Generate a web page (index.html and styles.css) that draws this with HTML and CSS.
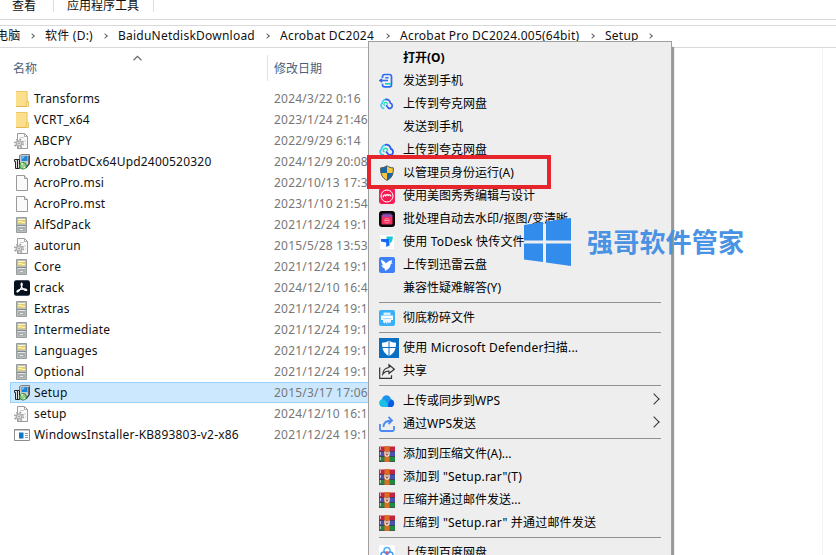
FILE: index.html
```html
<!DOCTYPE html>
<html lang="zh-CN">
<head>
    <meta charset="UTF-8">
    <title>Setup</title>
    <link rel="stylesheet" href="styles.css">
</head>
<body>
    <!-- icon shapes used by the file list and the menu -->
    <svg class="defs" width="0" height="0">
        <symbol id="folder" viewBox="0 0 16 16">
            <path d="M2 .5h11.500v10h1v5H2z" fill="#fbdf8c"/>
            <path d="M2 .5h11v10M12.500 10.500h2v5H12z" fill="none" stroke="#ecc765"/>
            <path d="M2 15.500h10" stroke="#e3b84c"/>
        </symbol>
        <symbol id="file" viewBox="0 0 16 16">
            <path d="M2.500.5h8l3 3v12h-11z" fill="#fafafa" stroke="#999"/>
            <path d="M10.500.5v3h3" fill="#eee" stroke="#999"/>
        </symbol>
        <symbol id="config" viewBox="0 0 16 16">
            <path d="M3.500.5h7l3 3v12h-10z" fill="#fafafa" stroke="#999"/>
            <path d="M10.500.5v3h3" fill="none" stroke="#aaa"/>
            <path d="M6 4.500h4M10 8h2M11 11h1" fill="none" stroke="#ccc"/>
            <circle cx="5" cy="10.500" r="4.200" fill="none" stroke="#999" stroke-width="1.600" stroke-dasharray="1.700 1.600"/>
            <circle cx="5" cy="10.500" r="2.600" fill="#f4f4f4" stroke="#aaa" stroke-width="1.500"/>
            <circle cx="5" cy="10.500" r="1" fill="#999"/>
        </symbol>
        <symbol id="cabinet" viewBox="0 0 16 16">
            <path d="M2.500.5h10v15h-10z" fill="#b9bdbd" stroke="#979c9c"/>
            <path d="M4 3.500h7v3H4z" fill="#f3d65b"/>
            <path d="M4 2.500h7M4 5l3-1 1 1.500h3" fill="none" stroke="#fff6c4"/>
            <path d="M3 8.500h9" stroke="#858b8b"/>
            <path d="M4 10h7v4H4z" fill="#a9afaf"/>
            <path d="M4 9.500h7M6 12.500h3" stroke="#e6e6e6"/>
        </symbol>
        <symbol id="setup" viewBox="0 0 16 16">
            <path d="M5.500 1.500l2-1h8v9l-2 2h-8z" fill="#c5cbd0" stroke="#666" stroke-width=".8"/>
            <path d="M7.500 2h6v5h-6z" fill="#1c87d8"/>
            <path d="M8 2.500h3L8.500 5z" fill="#8fd4ff"/>
            <path d="M15 2v8l-3 4" fill="none" stroke="#333" stroke-width="1.200"/>
            <path d="M.5 5.500h5v9h-4v-7h-1zM3.500 6v9" fill="#ddd" stroke="#222"/>
            <circle cx="9" cy="11.800" r="3.300" fill="#9fd884" stroke="#1d8a35" stroke-width="1"/>
            <path d="M9 11.800L6.500 9.500 9 8.800zM9 11.800l2.800 1.200-2 1.700z" fill="#f0f6c8"/>
            <circle cx="9" cy="11.800" r="1.100" fill="#fff" stroke="#2a7a39" stroke-width=".5"/>
        </symbol>
        <symbol id="acrobat" viewBox="0 0 16 16">
            <rect width="16" height="15.500" y=".2" rx="2.200" fill="#05111f"/>
            <path d="M3.200 12c-1.200-.6.800-2 3.300-2.600s5.500-.5 6.300.5c.6.9-1.600 1-3.300-.5C7.800 7.600 6.800 5 7.200 3.600c.4-1.200 1.400-.2 1 1.600-.5 2.600-3.700 7.300-5 6.800z" fill="none" stroke="#fff" stroke-width="1.100"/>
        </symbol>
        <symbol id="exe" viewBox="0 0 16 16">
            <path d="M.5 2.500h15v11H.5z" fill="#fff" stroke="#8c8c8c"/>
            <path d="M1 3h14v1H1z" fill="#ccc"/>
            <path d="M5 5.500h4.500v6H5z" fill="#0b79c9"/>
            <path d="M11 6.500h3M11 8.500h3M11 10.500h3" stroke="#8a9ba8"/>
        </symbol>
        <symbol id="phone" viewBox="0 0 16 16">
            <path d="M3.500 5V3.700q0-2.200 2.200-2.200h4.600q2.200 0 2.200 2.200v8q0 2.200-2.200 2.200H5.700q-2.200 0-2.200-2.200v-1" fill="none" stroke="#2f6bf2" stroke-width="1.700"/>
            <path d="M9.500 4.800H6.300M9 7.500H1l2-1.700M1 7.500l2 1.700" fill="none" stroke="#2f6bf2" stroke-width="1.500"/>
            <path d="M6 10.800h6" stroke="#18d3c4" stroke-width="1.600"/>
        </symbol>
        <symbol id="quark" viewBox="0 0 16 16">
            <path d="M5 13H4.200A3.200 3.200 0 0 1 2.500 7.200Q3 3 7 2.800" fill="none" stroke="#38c8f4" stroke-width="1.800"/>
            <path d="M6 2.900c3-.8 5.500 1 5.800 4A3.200 3.200 0 0 1 11.800 13H10L7 9.500" fill="none" stroke="#295cf0" stroke-width="1.800"/>
            <path d="M8.300 9A2 2 0 1 0 5.500 10" fill="none" stroke="#1fe0b8" stroke-width="1.400"/>
        </symbol>
        <symbol id="shield" viewBox="0 0 16 16">
            <path d="M8 .6c2 1.500 4 2 6.500 2.200 0 6-1.200 10-6.500 12.800C2.700 12.800 1.500 8.800 1.500 2.800 4 2.600 6 2.100 8 .6z" fill="#f8c63d"/>
            <path d="M8 .8V8H1.800C1.500 6.200 1.500 4 1.500 2.900 4 2.600 6 2.100 8 .8zM8 8h6.200c-.7 3.400-2.500 5.800-6.200 7.500z" fill="#1767a8"/>
            <path d="M8 .8c2 1.500 4 2 6.400 2.100 0 6-1.200 9.800-6.400 12.500C2.800 12.700 1.600 8.900 1.600 2.900 4 2.700 6 2.200 8 .8z" fill="none" stroke="#4e5a60"/>
        </symbol>
        <symbol id="meitu" viewBox="0 0 16 16">
            <rect width="16" height="16" rx="3" fill="#f51c55"/>
            <circle cx="8" cy="8" r="6" fill="none" stroke="#fff" stroke-width="1"/>
            <path d="M4 9.500c.2-2.500 2-3.200 2.800-1.700C7.500 6.300 8.700 6.300 9.200 7.500c1.200-1.200 2.400-.6 2.800.8" fill="none" stroke="#fff" stroke-width="1.200"/>
        </symbol>
        <symbol id="batch" viewBox="0 0 16 16">
            <rect width="16" height="16" rx="3" fill="#0b0709"/>
            <path d="M3.500 2.500h9v2h-9z" fill="#70479c"/>
            <path d="M2.500 4h11v2.500h-11z" fill="#9b4bb0"/>
            <rect x="2.500" y="6" width="11" height="7.500" rx="1" fill="#f52c5c"/>
            <circle cx="8" cy="9.700" r="2.400" fill="none" stroke="#ff9ab2" stroke-width=".7"/>
            <path d="M6.300 10q.8-1.500 1.700-.5 1-1 1.700.5" fill="none" stroke="#ffd5de" stroke-width=".8"/>
        </symbol>
        <symbol id="todesk" viewBox="0 0 16 16">
            <path d="M1 1h14v14H1z" fill="#fff"/>
            <path d="M7.500 2.500H14l-.8 4.500L11 9.500V5.500L7.500 5z" fill="#18c8cc"/>
            <path d="M2 5h8.500v6.500L7.200 13V8.500L2 7.500z" fill="#1769f5"/>
        </symbol>
        <symbol id="thunder" viewBox="0 0 16 16">
            <rect width="16" height="16" rx="2" fill="#3f80f6"/>
            <path d="M2 2.500c1.500 1 3.500 1.600 5 4C8.200 5 9.800 3.600 13 3.200c.3 1-.2 1.600-.8 2.300l1.600.8-2 .8C11.500 10 10 12.500 6 14c.3-1.300 0-2-1-2.700-1.500-1-2.300-2-2.500-3.200l2 .3C3 7 2 5 2 2.500z" fill="#fff"/>
        </symbol>
        <symbol id="shred" viewBox="0 0 16 16">
            <rect width="16" height="16" rx="2" fill="#38b0fa"/>
            <path d="M4.500 2.500h7V5h-7z" fill="#d9f1ff"/>
            <path d="M2 5.500h12V10H2z" fill="#fff"/>
            <path d="M4 9h8v4l-1-1-1 1.500-1.200-1.500-1 2-1.200-2-1.200 1.500L4 12z" fill="#eaf7ff"/>
            <path d="M3.500 8.500h9" stroke="#8fd2fb" stroke-width=".8"/>
        </symbol>
        <symbol id="defender" viewBox="0 0 20 20">
            <path d="M0 0h20v20H0z" fill="#0a70c4"/>
            <path d="M10 2.500c2.200 1.600 4.500 2.200 7 2.200 0 6.300-1.500 10.300-7 13.300-5.500-3-7-7-7-13.300 2.500 0 4.800-.6 7-2.200z" fill="#fff"/>
            <path d="M10 2v16M3 9.500h14" stroke="#0a70c4" stroke-width="1"/>
        </symbol>
        <symbol id="share" viewBox="0 0 16 16">
            <path d="M.7 4.500v10.800h11.800v-3" fill="none" stroke="#333" stroke-width="1.200"/>
            <path d="M10 1.800l5.300 4.400-5.300 4.300V8c-2.500 0-4.500.8-6.300 3.200C4 7.300 6 5 10 4.500z" fill="none" stroke="#333" stroke-width="1.200"/>
        </symbol>
        <symbol id="wpscloud" viewBox="0 0 16 16">
            <path d="M4 14A4 4 0 0 1 3 6.300C4 1 11 1 12 6.300A4 4 0 0 1 12.500 14z" fill="#1a93f0"/>
            <path d="M4 14A4 4 0 0 1 3 6.300q5.500 1 6 7.700z" fill="#18c1e4"/>
            <path d="M9 14q0-6 3.500-7.500a4 4 0 0 1 0 7.500z" fill="#0b5be2"/>
        </symbol>
        <symbol id="wpssend" viewBox="0 0 16 16">
            <path d="M1 8v5.500q0 1.500 1.500 1.500h11q1.500 0 1.500-1.500V10" fill="none" stroke="#4a8af4" stroke-width="1.800"/>
            <path d="M4.500 11c0-4 2.500-6.500 8.500-6.500M9.500 1L13 4.500 9.500 8" fill="none" stroke="#4a8af4" stroke-width="1.800"/>
        </symbol>
        <symbol id="rar" viewBox="0 0 16 16">
            <path d="M0 .5h16v5H0z" fill="#c22340"/>
            <path d="M0 5.500h16v5H0z" fill="#4552b4"/>
            <path d="M0 10.500h16v5H0z" fill="#1d8b3b"/>
            <path d="M0 5.500h16M0 10.500h16M0 15.500h16" stroke="#2c2436" stroke-width=".7"/>
            <path d="M1.500 1v14" stroke="#e5c9c9" stroke-width=".8" stroke-dasharray="3 2"/>
            <path d="M5.500 0h5v16h-5z" fill="#dc6e24"/>
            <path d="M5.500 5.500h5v5h-5z" fill="#a8562f"/>
            <path d="M6 5.500v3q0 1.700 2 1.700t2-1.700v-3M8 6v2" fill="none" stroke="#fff" stroke-width="1.100"/>
        </symbol>
        <symbol id="baidu" viewBox="0 0 16 16">
            <rect width="16" height="16" rx="2" fill="#fff"/>
            <circle cx="8" cy="5.500" r="3" fill="none" stroke="#4cb4f7" stroke-width="1.500"/>
            <circle cx="4.800" cy="9.800" r="2.800" fill="none" stroke="#3e9bf5" stroke-width="1.500"/>
            <circle cx="11.200" cy="9.800" r="2.800" fill="none" stroke="#3e9bf5" stroke-width="1.500"/>
            <circle cx="8" cy="7.500" r="1.500" fill="#f0586b"/>
        </symbol>
    </svg>

    <div class="ribbon">
        <span class="tab view">查看</span>
        <span class="tab tools">应用程序工具</span>
    </div>

    <div class="address">
        <span class="crumb pc">电脑</span>
        <span class="crumb drive">软件 (D:)</span>
        <span class="crumb netdisk">BaiduNetdiskDownload</span>
        <span class="crumb dc">Acrobat DC2024</span>
        <span class="crumb pro">Acrobat Pro DC2024.005(64bit)</span>
        <span class="crumb last">Setup</span>
    </div>

    <div class="pane">
        <div class="header">
            <div class="name">名称<svg class="sort" viewBox="0 0 8 5"><path d="M.5 4.500L4 1l3.500 3.500" fill="none" stroke="#666"/></svg></div>
            <div class="date">修改日期</div>
        </div>
        <div class="row"><svg><use href="#folder"/></svg><span class="name">Transforms</span><span class="date">2024/3/22 0:16</span></div>
        <div class="row"><svg><use href="#folder"/></svg><span class="name">VCRT_x64</span><span class="date">2023/1/24 21:46</span></div>
        <div class="row"><svg><use href="#config"/></svg><span class="name">ABCPY</span><span class="date">2022/9/29 6:14</span></div>
        <div class="row"><svg><use href="#setup"/></svg><span class="name">AcrobatDCx64Upd2400520320</span><span class="date">2024/12/9 20:08</span></div>
        <div class="row"><svg><use href="#file"/></svg><span class="name">AcroPro.msi</span><span class="date">2022/10/13 17:3</span></div>
        <div class="row"><svg><use href="#file"/></svg><span class="name">AcroPro.mst</span><span class="date">2023/1/10 21:54</span></div>
        <div class="row"><svg><use href="#cabinet"/></svg><span class="name">AlfSdPack</span><span class="date">2021/12/24 19:1</span></div>
        <div class="row"><svg><use href="#config"/></svg><span class="name">autorun</span><span class="date">2015/5/28 13:53</span></div>
        <div class="row"><svg><use href="#cabinet"/></svg><span class="name">Core</span><span class="date">2021/12/24 19:1</span></div>
        <div class="row"><svg><use href="#acrobat"/></svg><span class="name">crack</span><span class="date">2024/12/10 16:4</span></div>
        <div class="row"><svg><use href="#cabinet"/></svg><span class="name">Extras</span><span class="date">2021/12/24 19:1</span></div>
        <div class="row"><svg><use href="#cabinet"/></svg><span class="name">Intermediate</span><span class="date">2021/12/24 19:1</span></div>
        <div class="row"><svg><use href="#cabinet"/></svg><span class="name">Languages</span><span class="date">2021/12/24 19:1</span></div>
        <div class="row"><svg><use href="#cabinet"/></svg><span class="name">Optional</span><span class="date">2021/12/24 19:1</span></div>
        <div class="row selected"><svg><use href="#setup"/></svg><span class="name">Setup</span><span class="date">2015/3/17 17:06</span></div>
        <div class="row"><svg><use href="#config"/></svg><span class="name">setup</span><span class="date">2024/12/10 16:1</span></div>
        <div class="row"><svg><use href="#exe"/></svg><span class="name">WindowsInstaller-KB893803-v2-x86</span><span class="date">2021/12/24 19:1</span></div>
    </div>

    <div class="menu">
        <div class="item default"><i></i><span>打开(O)</span></div>
        <div class="item"><svg><use href="#phone"/></svg><span>发送到手机</span></div>
        <div class="item"><svg class="small"><use href="#quark"/></svg><span>上传到夸克网盘</span></div>
        <div class="item"><i></i><span>发送到手机</span></div>
        <div class="item"><svg><use href="#quark"/></svg><span>上传到夸克网盘</span></div>
        <div class="item"><svg><use href="#shield"/></svg><span>以管理员身份运行(A)</span></div>
        <div class="item"><svg><use href="#meitu"/></svg><span>使用美图秀秀编辑与设计</span></div>
        <div class="item"><svg><use href="#batch"/></svg><span>批处理自动去水印/抠图/变清晰</span></div>
        <div class="item wide"><svg><use href="#todesk"/></svg><span>使用 ToDesk 快传文件</span></div>
        <div class="item"><svg><use href="#thunder"/></svg><span>上传到迅雷云盘</span></div>
        <div class="item"><i></i><span>兼容性疑难解答(Y)</span></div>
        <hr>
        <div class="item"><svg><use href="#shred"/></svg><span>彻底粉碎文件</span></div>
        <hr>
        <div class="item wide"><svg class="big"><use href="#defender"/></svg><span>使用 Microsoft Defender扫描...</span></div>
        <div class="item"><svg><use href="#share"/></svg><span>共享</span></div>
        <hr>
        <div class="item sub"><svg><use href="#wpscloud"/></svg><span>上传或同步到WPS</span></div>
        <div class="item sub"><svg><use href="#wpssend"/></svg><span>通过WPS发送</span></div>
        <hr>
        <div class="item"><svg><use href="#rar"/></svg><span>添加到压缩文件(A)...</span></div>
        <div class="item wide"><svg><use href="#rar"/></svg><span>添加到 "Setup.rar"(T)</span></div>
        <div class="item"><svg><use href="#rar"/></svg><span>压缩并通过邮件发送...</span></div>
        <div class="item wide"><svg><use href="#rar"/></svg><span>压缩到 "Setup.rar" 并通过邮件发送</span></div>
        <hr>
        <div class="item"><svg><use href="#baidu"/></svg><span>上传到百度网盘</span></div>
    </div>

    <div class="highlight"></div>

    <div class="watermark">
        <svg viewBox="0 0 47 48"><path d="M0 7l19-3v18.500H0zM22 3.500L47 0v22.500H22zM0 25.500h19V44L0 41.500zM22 25.500h25V48l-25-3.500z" fill="#318cec"/></svg>
        <span>强哥软件管家</span>
    </div>
</body>
</html>
```
FILE: styles.css
```css
body {
    margin: 0;
    width: 836px;
    height: 555px;
    overflow: hidden;
    position: relative;
    background: #fff;
    color: #111;
    font-family: "Noto Sans", "Noto Sans CJK SC", sans-serif;
    font-size: 12px;
}

.defs {
    position: absolute;
}

.ribbon {
    display: flex;
    height: 19px;
    border-bottom: 1px solid #d9d9d9;
}

.tab {
    box-sizing: border-box;
    height: 12px;
    line-height: 12px;
    border-right: 1px solid #ddd;
    white-space: nowrap;
}

.view {
    width: 54px;
    padding-left: 12px;
}

.tools {
    width: 100px;
    padding-left: 13px;
}

.address {
    display: flex;
    height: 21px;
    margin-top: 5px;
    border-top: 1px solid #d9d9d9;
    border-bottom: 1px solid #d9d9d9;
    line-height: 19px;
    letter-spacing: 0.23px;
    white-space: nowrap;
}

.crumb {
    position: relative;
    box-sizing: border-box;
}

/* chevron between path parts */
.crumb::after {
    content: "";
    position: absolute;
    right: 11px;
    top: 8px;
    width: 4px;
    height: 4px;
    box-sizing: border-box;
    border: solid #666;
    border-width: 1.5px 1.5px 0 0;
    transform: rotate(45deg);
}

.pc {
    width: 45px;
    text-indent: -4px;
}

.drive {
    width: 73px;
}

.netdisk {
    width: 162px;
}

.dc {
    width: 120px;
}

.pro {
    width: 205px;
}

.last {
    width: 58px;
}

.pane {
    box-sizing: border-box;
    width: 823px;
    height: 508px;
    padding-left: 10px;
    border-right: 1px solid #f2f2f2;
}

.header {
    display: flex;
    height: 40px;
    line-height: 42px;
    color: #4c607a;
}

.header .name {
    position: relative;
    width: 254px;
    padding-left: 3px;
}

.header .date {
    height: 26px;
    line-height: 28px;
    margin-top: 7px;
    padding-left: 6px;
    border-left: 1px solid #e2e2e2;
}

.sort {
    position: absolute;
    left: 123px;
    top: 7px;
    width: 9px;
    height: 6px;
}

.row {
    display: flex;
    align-items: center;
    box-sizing: border-box;
    width: 400px;
    height: 21px;
    padding-left: 3px;
    border: 1px solid transparent;
    letter-spacing: 0.2px;
}

.row svg {
    width: 16px;
    height: 16px;
    margin-right: 4px;
}

.row .name {
    width: 240px;
    white-space: nowrap;
}

.row .date {
    color: #777;
    white-space: nowrap;
}

.row.selected {
    background: #cce8ff;
    border-color: #99d1ff;
}

.menu {
    position: absolute;
    left: 368px;
    top: 41px;
    box-sizing: border-box;
    width: 304px;
    height: 540px;
    padding: 4px 10px;
    background: #eee;
    border: 1px solid #a0a0a0;
    box-shadow: 2px 6px 1px #999;
}

.item {
    display: flex;
    align-items: center;
    position: relative;
    height: 23px;
    white-space: pre;
    color: #000;
}

.item span {
    padding-bottom: 2px;
}

.item svg,
.item i {
    width: 16px;
    height: 16px;
    margin-right: 8px;
    flex: none;
}

.item svg.big {
    width: 20px;
    height: 20px;
    margin-right: 4px;
}

.item svg.small {
    width: 14px;
    height: 14px;
    margin: 0 9px 0 1px;
}

.default {
    font-weight: bold;
}

.wide {
    letter-spacing: 0.2px;
}

/* submenu arrow */
.sub::after {
    content: "";
    position: absolute;
    right: 3px;
    top: 6px;
    width: 7px;
    height: 7px;
    border: solid #333;
    border-width: 1px 1px 0 0;
    transform: rotate(45deg);
}

.menu hr {
    height: 1px;
    margin: 3px 0;
    border: 0;
    background: #919191;
}

.highlight {
    position: absolute;
    left: 367px;
    top: 155px;
    width: 176px;
    height: 26px;
    border: 4px solid #e5242b;
}

.watermark {
    position: absolute;
    left: 524px;
    top: 218px;
    display: flex;
    align-items: center;
    color: #4a92e3;
    font-size: 26px;
    font-weight: bold;
    letter-spacing: 0.2px;
    line-height: 48px;
    white-space: nowrap;
}

.watermark svg {
    width: 47px;
    height: 48px;
    margin-right: 16px;
}
```
